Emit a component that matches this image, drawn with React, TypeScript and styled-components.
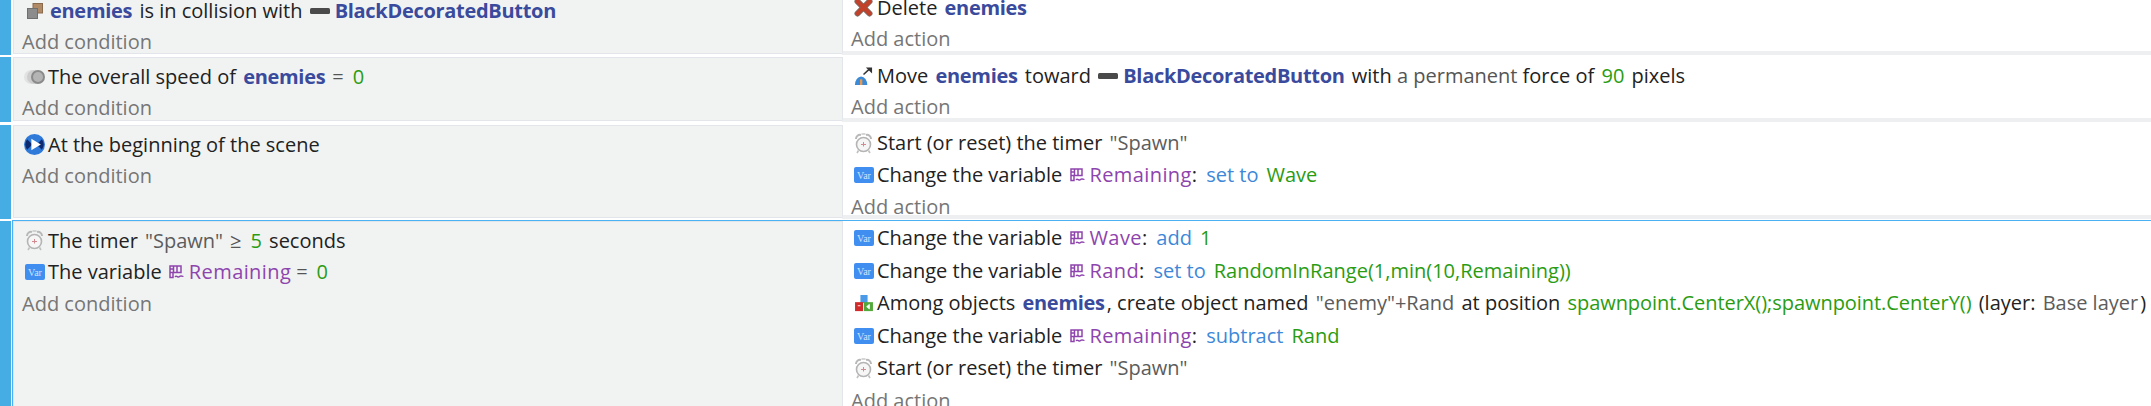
import styled, { createGlobalStyle } from 'styled-components'
import { ReactNode } from 'react'

const GlobalStyle = createGlobalStyle`
  html, body {
    margin: 0;
    padding: 0;
    background: #fff;
    overflow: hidden;
  }
  body {
    font-family: "Open Sans", "Noto Sans", sans-serif;
    font-size: 20px;
    line-height: 20px;
    color: #222;
  }
`

const Sheet = styled.div`
  width: 2151px;
  height: 406px;
  overflow: hidden;
`

/* the list is scrolled a little: the first event is cut by the top edge */
const EventList = styled.div`
  margin-top: -8px;
`

const EventRow = styled.div<{ $height: number; $gap: number }>`
  display: flex;
  height: ${p => p.$height}px;
  margin-bottom: ${p => p.$gap}px;
`

const Bar = styled.div`
  flex: none;
  width: 11px;
  background: #45ade4;
`

const Body = styled.div<{ $active?: boolean }>`
  flex: 1;
  display: flex;
  min-width: 0;
  box-sizing: border-box;
  ${p => p.$active
    ? 'margin: -1px 0 0 1px; border-top: 1px solid #4ab2f2; border-left: 1px solid #4ab2f2;'
    : 'margin-left: 2px;'}
`

const Conditions = styled.div<{ $top: number }>`
  flex: none;
  width: 829px;
  box-sizing: border-box;
  padding: ${p => p.$top}px 0 0 8px;
  margin-bottom: 1px;
  background: #f1f3f3;
  border: 1px solid #e2e5e9;
  border-right: none;
`

const Actions = styled.div<{ $top: number }>`
  flex: 1;
  box-sizing: border-box;
  padding: ${p => p.$top}px 0 0 8px;
  background: #fff;
  border-left: 1px solid #e2e5e9;
  border-bottom: 4px solid #eeeff1;
  min-width: 0;
`

const Line = styled.div<{ $step: number }>`
  display: flex;
  align-items: center;
  height: ${p => p.$step}px;
  white-space: pre;
`

const IconSlot = styled.span`
  flex: none;
  width: 21px;
  height: 22px;
  margin: 0 3px 0 2px;
  display: inline-flex;
  align-items: center;
  justify-content: center;
`

const AddLink = styled.div<{ $step: number }>`
  height: ${p => p.$step}px;
  line-height: ${p => p.$step}px;
  color: #767676;
`

const Obj = styled.b`
  font-weight: 700;
  letter-spacing: -0.3px;
  color: #3a4a9c;
  padding: 0 2px;
`

const Num = styled.span<{ $tight?: boolean }>`
  color: #2a9c12;
  padding: 0 2px 0 ${p => (p.$tight ? 2 : 6)}px;
  letter-spacing: ${p => (p.$tight ? '-0.05px' : '0')};
`

const Str = styled.span`
  color: #5c5c5c;
  padding: 0 2px;
`

const Op = styled.span`
  color: #3d88d8;
  padding: 0 2px 0 4px;
`

const VarName = styled.span`
  color: #8e44ad;
  letter-spacing: 0.4px;
  padding: 0 0 0 2px;
`

const Muted = styled.span`
  color: #555;
`

const Compare = styled.span`
  color: #555;
  padding: 0 3px 0 5px;
`

const InlineIcon = styled.span`
  display: inline-flex;
  align-items: center;
  margin: 0 3px 0 2px;
`

const ObjectsIcon = () => (
  <svg width="16" height="16" viewBox="0 0 16 16">
    <rect x="6" y="0.5" width="9.5" height="9.5" fill="#b08a66" stroke="#8a6a4c" />
    <rect x="0.5" y="5.5" width="10" height="10" fill="#8c8c8c" stroke="#6f6f6f" />
  </svg>
)

const SpeedIcon = () => (
  <svg width="21" height="14" viewBox="0 0 21 14">
    <circle cx="7" cy="7" r="7" fill="#e2e2e2" />
    <circle cx="10" cy="7" r="7" fill="#cdcdcd" />
    <circle cx="14" cy="7" r="7" fill="#8a8a8a" />
    <circle cx="14" cy="7" r="5" fill="#b4b4b4" />
  </svg>
)

const SceneIcon = () => (
  <svg width="21" height="21" viewBox="0 0 20 20">
    <circle cx="10" cy="10" r="10" fill="#2f7ad8" />
    <path d="M3 5 A8.5 8.5 0 0 0 3 15 L8 10 Z M17 5 A8.5 8.5 0 0 1 17 15 L12 10 Z" fill="#0d2a70" />
    <path d="M7 4.5 L16 10 L7 15.5 Z" fill="#fff" />
  </svg>
)

const TimerIcon = () => (
  <svg width="17" height="21" viewBox="0 0 17 21">
    <path d="M1 6 A4 4 0 0 1 6 2 M16 6 A4 4 0 0 0 11 2" fill="none" stroke="#b8b8b8" strokeWidth="2" />
    <path d="M6.5 1 H10.5" stroke="#c4c4c4" strokeWidth="1.4" />
    <circle cx="8.5" cy="11.5" r="7" fill="#f6f6f6" stroke="#b4b4b4" strokeWidth="1.6" />
    <path d="M8.5 9 V13.5 M6 11.5 H11" fill="none" stroke="#d08a90" strokeWidth="1" />
    <path d="M3.5 17.5 L2 20 M13.5 17.5 L15 20" stroke="#c0c0c0" strokeWidth="1.6" />
  </svg>
)

const VarIcon = () => (
  <svg width="20" height="16" viewBox="0 0 20 16">
    <rect width="20" height="16" rx="2" fill="#3f8ef0" />
    <text x="10" y="11.5" fontSize="10" fontFamily="Liberation Serif, serif" fill="#cfe3ff" textAnchor="middle">Var</text>
  </svg>
)

const DeleteIcon = () => (
  <svg width="19" height="19" viewBox="0 0 19 19" fill="none" strokeLinecap="round">
    <path d="M3.5 3.5 L15.5 15.5 M15.5 3.5 L3.5 15.5" stroke="#7d6a62" strokeWidth="6" />
    <path d="M3.5 3.5 L15.5 15.5 M15.5 3.5 L3.5 15.5" stroke="#c2412a" strokeWidth="4" />
  </svg>
)

const MoveIcon = () => (
  <svg width="19" height="19" viewBox="0 0 20 20">
    <path d="M1 20 a6.5 9 0 0 1 13 0 Z" fill="#3a8ad8" />
    <path d="M7.5 20 V14" stroke="#e89a50" strokeWidth="2.5" />
    <path d="M10 9 L17 2.5" stroke="#333" strokeWidth="1.6" />
    <path d="M12.5 1.5 H19 V8 Z" fill="#333" />
  </svg>
)

const CreateIcon = () => (
  <svg width="18" height="17" viewBox="0 0 20 19">
    <rect x="6" y="0" width="8" height="9" fill="#4a9ae8" />
    <rect x="0" y="8" width="9" height="10" fill="#d02a2a" />
    <rect x="10" y="8" width="10" height="10" fill="#52a83a" />
    <path d="M3 12 h3 M13 13 l3 -2.5 v5 Z" stroke="#fff" strokeWidth="1" fill="#fff" />
  </svg>
)

const ButtonIcon = () => (
  <svg width="20" height="6" viewBox="0 0 20 6">
    <rect width="20" height="6" rx="1.5" fill="#4a4a4a" />
  </svg>
)

const SceneVarIcon = () => (
  <svg width="15" height="14" viewBox="0 0 15 14" fill="none" stroke="#8e44ad">
    <path d="M1 1 H12 V7.5 H1 Z M1 1 V12.5 H4 V7.5 M4.5 1 V7.5 M8 1 V7.5" strokeWidth="1.5" />
    <path d="M1 4 H4" strokeWidth="1.5" />
    <path d="M6 12 C7.5 9.5 9 13.5 10.5 11.5 C11.5 10.5 13 11 14.5 11.5" strokeWidth="1.3" />
  </svg>
)

const Button = () => <InlineIcon><ButtonIcon /></InlineIcon>

const Var = ({ name }: { name: string }) => (
  <>
    <InlineIcon><SceneVarIcon /></InlineIcon>
    <VarName>{name}</VarName>
  </>
)

type Item = { icon: ReactNode; content: ReactNode }

const Instruction = ({ item, step }: { item: Item; step: number }) => (
  <Line $step={step}>
    <IconSlot>{item.icon}</IconSlot>
    {item.content}
  </Line>
)

const timerStart: Item = {
  icon: <TimerIcon />,
  content: <>Start (or reset) the timer <Str>"Spawn"</Str></>,
}

type EventData = {
  height: number
  gap: number
  topLeft: number
  topRight: number
  stepLeft: number
  stepRight: number
  active?: boolean
  conditions: Item[]
  actions: Item[]
}

const events: EventData[] = [
  {
    height: 63, gap: 2, topLeft: 2, topRight: 0, stepLeft: 31, stepRight: 31,
    conditions: [
      { icon: <ObjectsIcon />, content: <><Obj>enemies</Obj> is in collision with <Button /><Obj>BlackDecoratedButton</Obj></> },
    ],
    actions: [
      { icon: <DeleteIcon />, content: <>Delete <Obj>enemies</Obj></> },
    ],
  },
  {
    height: 65, gap: 3, topLeft: 3, topRight: 3, stepLeft: 31, stepRight: 31,
    conditions: [
      { icon: <SpeedIcon />, content: <>The overall speed of <Obj>enemies</Obj> <Compare>=</Compare> <Num>0</Num></> },
    ],
    actions: [
      { icon: <MoveIcon />, content: <>Move <Obj>enemies</Obj> toward <Button /><Obj>BlackDecoratedButton</Obj> with <Muted>a permanent</Muted> force of <Num $tight>90</Num> pixels</> },
    ],
  },
  {
    height: 94, gap: 2, topLeft: 3, topRight: 2, stepLeft: 31, stepRight: 32,
    conditions: [
      { icon: <SceneIcon />, content: <>At the beginning of the scene</> },
    ],
    actions: [
      timerStart,
      { icon: <VarIcon />, content: <>Change the variable <Var name="Remaining" />: <Op>set to</Op> <Num>Wave</Num></> },
    ],
  },
  {
    height: 190, gap: 0, topLeft: 3, topRight: 1, stepLeft: 31.5, stepRight: 32.5,
    active: true,
    conditions: [
      { icon: <TimerIcon />, content: <>The timer <Str>"Spawn"</Str> <Compare>≥</Compare> <Num>5</Num> seconds</> },
      { icon: <VarIcon />, content: <>The variable <Var name="Remaining" /> <Compare>=</Compare> <Num>0</Num></> },
    ],
    actions: [
      { icon: <VarIcon />, content: <>Change the variable <Var name="Wave" />: <Op>add</Op> <Num>1</Num></> },
      { icon: <VarIcon />, content: <>Change the variable <Var name="Rand" />: <Op>set to</Op> <Num>RandomInRange(1,min(10,Remaining))</Num></> },
      { icon: <CreateIcon />, content: <>Among objects <Obj>enemies</Obj>, create object named <Str>"enemy"+Rand</Str> at position <Num $tight>spawnpoint.CenterX();spawnpoint.CenterY()</Num> (layer: <Str>Base layer</Str>)</> },
      { icon: <VarIcon />, content: <>Change the variable <Var name="Remaining" />: <Op>subtract</Op> <Num>Rand</Num></> },
      timerStart,
    ],
  },
]

export default function App() {
  return (
    <Sheet>
      <GlobalStyle />
      <EventList>
        {events.map((ev, i) => (
          <EventRow key={i} $height={ev.height} $gap={ev.gap}>
            <Bar />
            <Body $active={ev.active}>
              <Conditions $top={ev.topLeft}>
                {ev.conditions.map((c, j) => <Instruction key={j} item={c} step={ev.stepLeft} />)}
                <AddLink $step={ev.stepLeft}>Add condition</AddLink>
              </Conditions>
              <Actions $top={ev.topRight}>
                {ev.actions.map((a, j) => <Instruction key={j} item={a} step={ev.stepRight} />)}
                <AddLink $step={ev.stepRight}>Add action</AddLink>
              </Actions>
            </Body>
          </EventRow>
        ))}
      </EventList>
    </Sheet>
  )
}
